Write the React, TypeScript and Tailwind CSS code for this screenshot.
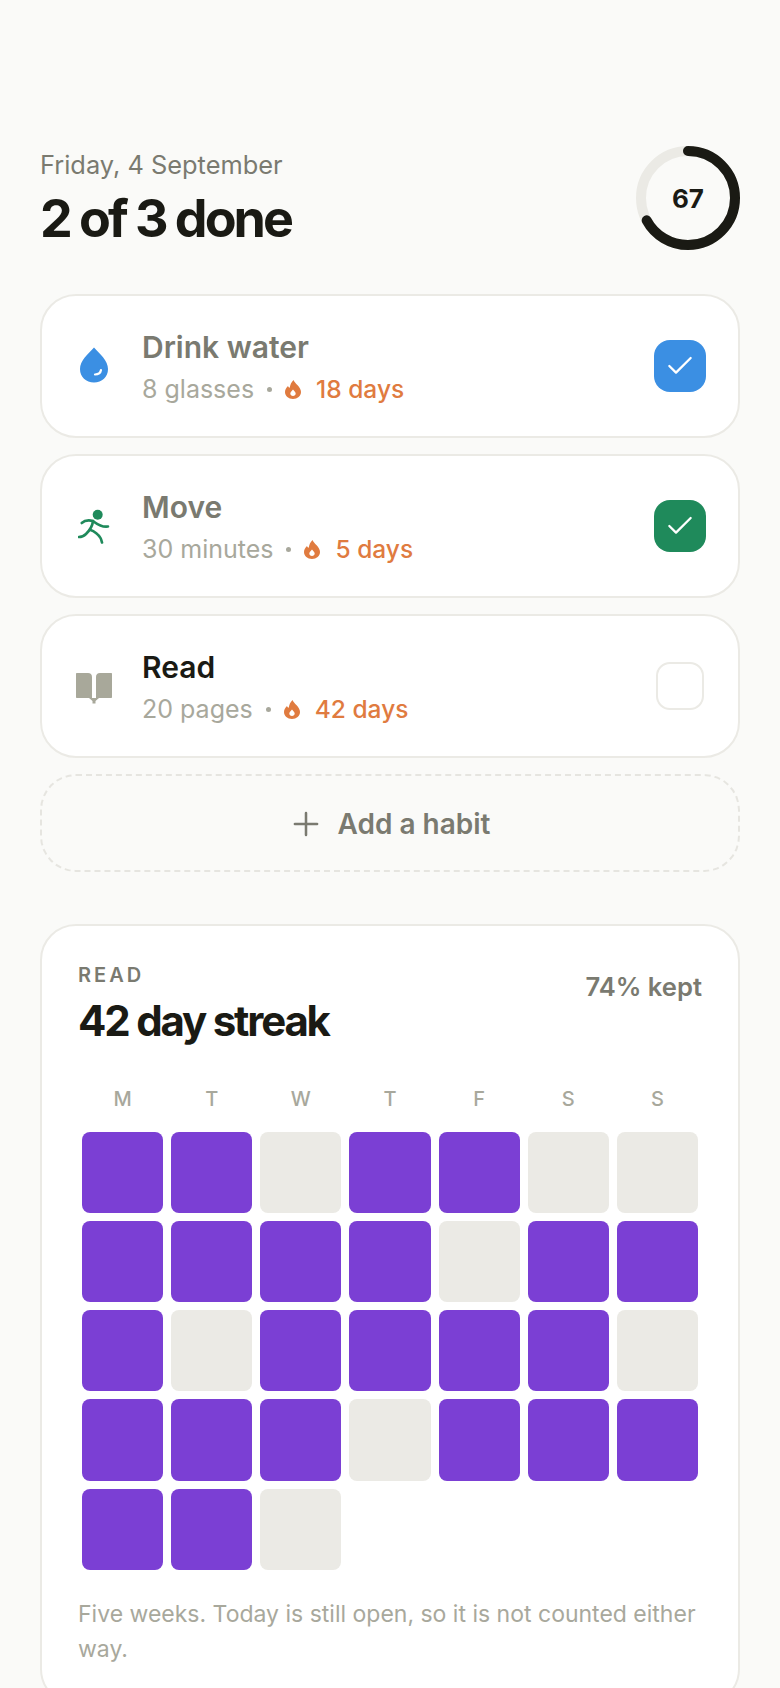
import { Check, Plus } from 'lucide-react';

const C = 2 * Math.PI * 47;

function Flame() {
  return (
    <svg viewBox="0 0 16 19" className="h-[19px] w-4 shrink-0 fill-[#e07b3f]">
      <path fillRule="evenodd" d="M8.500 0C9.500 3.500 16 6.800 16 12 16 16 12.400 19 8 19S0 16 0 12C0 9.500 1.400 7.500 3 6 3.400 7 4 7.500 4.800 7.800 5 5 6.400 2 8.500 0ZM8 9.500C7 11 5.300 12 5.300 13.600 5.300 15.100 6.500 16 8 16S10.700 15.100 10.700 13.600C10.700 12 9 11 8 9.500Z" />
    </svg>
  );
}

function Drop() {
  return (
    <svg viewBox="0 0 28 36" className="mb-[3px] h-9 w-7">
      <path fill="#3b8fe3" d="M14 .5C20 7 28 13.500 28 22 28 30 22 35.500 14 35.500S0 30 0 22C0 13.500 8 7 14 .5Z" />
      <path fill="none" stroke="#fff" strokeWidth="2.200" strokeLinecap="round" d="M15 27.500C18 27.500 20.500 26 21 23" />
    </svg>
  );
}

function Runner() {
  return (
    <svg viewBox="0 -2 32 36" className="h-9 w-8" fill="none" stroke="#1f8a5b" strokeWidth="2.600" strokeLinecap="round" strokeLinejoin="round">
      <circle cx="19.700" cy="4.700" r="5" fill="#1f8a5b" stroke="none" />
      <path d="M3.700 13C7 10 11 10 15 11 18 13 22 17.500 30 16.500" />
      <path d="M15 11C14.500 16 11 21 8 24 6 26 3 27 .8 27" />
      <path d="M12.500 20C16 21 21 25 22.500 28 23.500 30 23.500 31 24 32.500" />
    </svg>
  );
}

function Book() {
  return (
    <svg viewBox="0 0 36 31" className="mt-1 h-[31px] w-9 fill-[#a8a89a]">
      <path d="M1 0H12C14.500 0 16 1.500 16 4V25H1C.4 25 0 24.600 0 24V1C0 .4 .4 0 1 0Z" />
      <path d="M35 0H24C21.500 0 20 1.500 20 4V25H35C35.600 25 36 24.600 36 24V1C36 .4 35.600 0 35 0Z" />
      <path d="M13 25H23L19.500 28V30.500H16.500V28Z" />
    </svg>
  );
}

const habits = [
  { name: 'Drink water', sub: '8 glasses', streak: '18 days', icon: <Drop />, color: 'bg-[#3b8fe3]', done: true },
  { name: 'Move', sub: '30 minutes', streak: '5 days', icon: <Runner />, color: 'bg-[#1f8a5b]', done: true },
  { name: 'Read', sub: '20 pages', streak: '42 days', icon: <Book />, color: '', done: false },
];

const days = ['M', 'T', 'W', 'T', 'F', 'S', 'S'];
const cells = [1, 1, 0, 1, 1, 0, 0, 1, 1, 1, 1, 0, 1, 1, 1, 0, 1, 1, 1, 1, 0, 1, 1, 1, 0, 1, 1, 1, 1, 1, 0];

export default function App() {
  return (
    <div className="h-[1688px] overflow-hidden bg-[#fafaf8] px-10 pt-[146px] font-['Inter',sans-serif] text-[#1a1a14]">
      {/* Header */}
      <div className="flex items-start justify-between">
        <div className="pt-px">
          <p className="text-[25.4px] leading-[36px] text-[#7a7a70]">Friday, 4 September</p>
          <h1 className="mt-[6px] text-[52px] leading-[60px] font-bold tracking-[-3px]">2 of 3 done</h1>
        </div>
        <div className="relative h-[104px] w-[104px]">
          <svg viewBox="0 0 104 104" className="h-[104px] w-[104px] -rotate-90">
            <circle cx="52" cy="52" r="47" fill="none" stroke="#ebeae5" strokeWidth="10" />
            <circle cx="52" cy="52" r="47" fill="none" stroke="#1a1a14" strokeWidth="10" strokeLinecap="round" strokeDasharray={`${C * 0.67} ${C}`} />
          </svg>
          <span className="absolute inset-0 flex items-center justify-center text-[26px] font-bold">67</span>
        </div>
      </div>

      {/* Habits */}
      <div className="mt-[44px] flex flex-col gap-4">
        {habits.map((h) => (
          <div key={h.name} className="flex h-[144px] items-center rounded-[36px] border-2 border-[#ebeae5] bg-white px-8">
            <div className="flex w-10 shrink-0 items-center justify-center">{h.icon}</div>
            <div className="ml-7 flex-1 pt-[2px]">
              <p className={`text-[30px] leading-[40px] font-semibold ${h.done ? 'text-[#7a7a70]' : 'text-[#1a1a14]'}`}>{h.name}</p>
              <div className="mt-1 flex items-center text-[25px] leading-[36px] text-[#a8a89c]">
                <span>{h.sub}</span>
                <span className="mx-[13px] h-[5px] w-[5px] rounded-full bg-[#a8a89c]"></span>
                <Flame />
                <span className="ml-[15px] text-[24.5px] font-medium text-[#e07b3f]">{h.streak}</span>
              </div>
            </div>
            {h.done ? (
              <div className={`flex h-[52px] w-[52px] items-center justify-center rounded-2xl ${h.color}`}>
                <Check className="h-8 w-8 text-white" strokeWidth={1.7} />
              </div>
            ) : (
              <div className="mx-[2px] h-12 w-12 rounded-[14px] border-2 border-[#ebeae5]"></div>
            )}
          </div>
        ))}
        <div className="flex h-[98px] items-center justify-center gap-[13px] rounded-[36px] border-2 border-dashed border-[#e6e5e0] pt-[2px] pr-[3px] text-[#7a7a70]">
          <Plus className="h-[38px] w-[38px]" strokeWidth={1.6} />
          <span className="text-[28px] font-semibold">Add a habit</span>
        </div>
      </div>

      {/* Streak card */}
      <div className="mt-[52px] rounded-[36px] border-2 border-[#ebeae5] bg-white p-9">
        <div className="flex items-start justify-between">
          <div>
            <p className="pt-px text-[20px] leading-[24px] font-semibold tracking-[3px] text-[#7a7a70]">READ</p>
            <h2 className="mt-[10px] text-[42px] leading-[48px] font-bold tracking-[-2.2px]">42 day streak</h2>
          </div>
          <span className="mt-[7px] text-[25.6px] leading-[36px] font-semibold text-[#7a7a70]">74% kept</span>
        </div>
        <div className="mt-[40px] px-1">
          <div className="grid grid-cols-7 gap-2">
            {days.map((d, i) => (
              <span key={i} className="text-center text-[20px] leading-[28px] font-medium text-[#a8a89c]">{d}</span>
            ))}
          </div>
          <div className="mt-[19px] grid grid-cols-7 gap-2">
            {cells.map((on, i) => (
              <div key={i} className={`aspect-square rounded-lg ${on ? 'bg-[#7b3fd4]' : 'bg-[#ebeae5]'}`}></div>
            ))}
          </div>
        </div>
        <p className="mt-[27px] text-[23px] leading-[35px] text-[#a8a89c]">Five weeks. Today is still open, so it is not counted either way.</p>
      </div>
    </div>
  );
}
